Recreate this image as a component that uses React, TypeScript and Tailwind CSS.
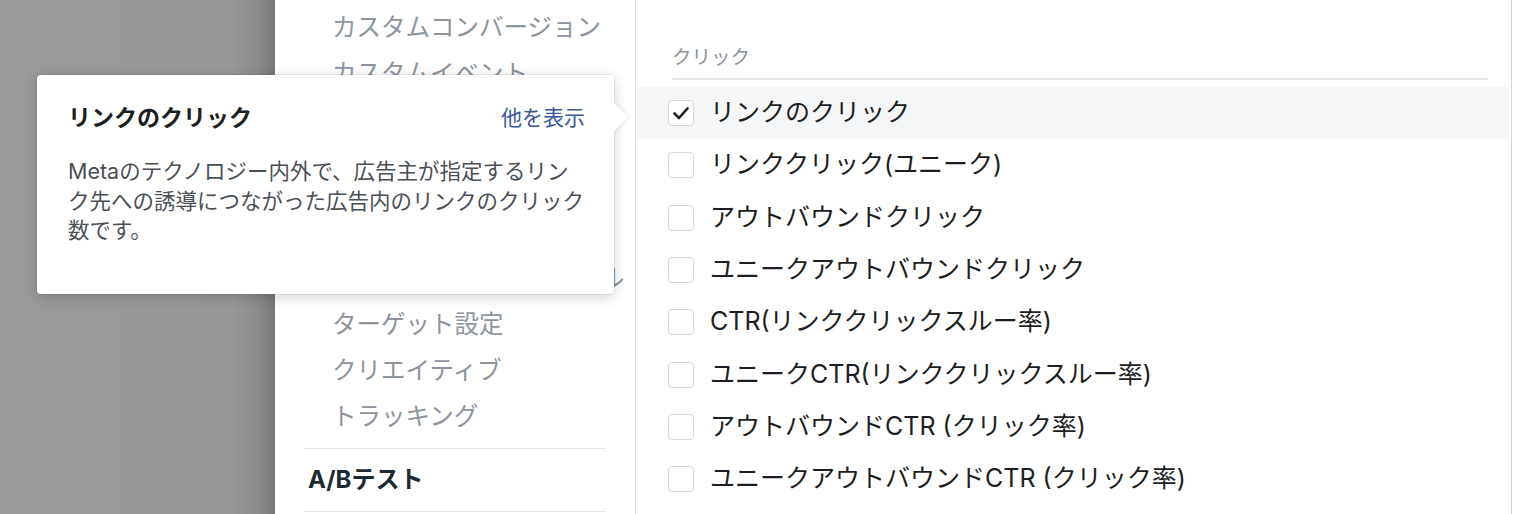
import React from "react";

const navTop = ["カスタムコンバージョン", "カスタムイベント"];
const navSettings = ["オブジェクト名", "ステータスと日付", "予算と入札・スケジュール", "ターゲット設定", "クリエイティブ", "トラッキング"];

const items = [
  { label: "リンクのクリック", checked: true },
  { label: "リンククリック(ユニーク)" },
  { label: "アウトバウンドクリック" },
  { label: "ユニークアウトバウンドクリック" },
  { label: "CTR(リンククリックスルー率)" },
  { label: "ユニークCTR(リンククリックスルー率)" },
  { label: "アウトバウンドCTR (クリック率)" },
  { label: "ユニークアウトバウンドCTR (クリック率)" },
];

function Check() {
  return (
    <svg width="20" height="20" viewBox="0 0 20 20" fill="none">
      <path d="M3.5 10.5 L8 15 L16.5 5.5" stroke="#1c1e21" strokeWidth="2.6" strokeLinecap="round" strokeLinejoin="round" />
    </svg>
  );
}

export default function App() {
  return (
    <div className="relative w-[1514px] h-[514px] overflow-hidden bg-white flex font-['Inter','Noto_Sans_CJK_JP',sans-serif]">
      {/* dimmed backdrop */}
      <div className="w-[275px] shrink-0 h-full bg-[linear-gradient(to_right,#9a9a9a_0%,#979797_85%,#8a8a8a_94%,#777777_100%)]" />

      {/* panel */}
      <div className="w-[1237px] shrink-0 h-full flex border-r border-[#d4d6da]">
        {/* left nav */}
        <div className="w-[361px] shrink-0 h-full border-r border-[#dadde1] flex flex-col pt-[2px] overflow-hidden">
          {navTop.map((t) => (
            <div key={t} className="h-[46px] shrink-0 flex items-center pt-[4px] pl-[57px] text-[24.5px] leading-[30px] text-[#8d949e] whitespace-nowrap">
              {t}
            </div>
          ))}
          <div className="mt-[11px] mx-[29px] h-px shrink-0 bg-[#e4e6eb]" />
          <div className="h-[55px] shrink-0 flex items-center pl-[33px] text-[24px] font-bold text-[#1c2b33]">設定</div>
          {navSettings.map((t) => (
            <div key={t} className="h-[46px] shrink-0 flex items-center pt-[4px] pl-[57px] text-[24.5px] leading-[30px] text-[#8d949e] whitespace-nowrap">
              {t}
            </div>
          ))}
          <div className="mt-[11px] mx-[29px] h-px shrink-0 bg-[#e4e6eb]" />
          <div className="h-[62px] shrink-0 pt-[16px] pl-[33px] text-[24px] leading-[30px] font-bold text-[#1c2b33]">A/Bテスト</div>
          <div className="mx-[29px] h-px shrink-0 bg-[#e4e6eb]" />
        </div>

        {/* right column */}
        <div className="flex-1 h-full flex flex-col pr-[2px]">
          <div className="ml-[36px] mr-[21px] pt-[44px]">
            <div className="text-[19.5px] leading-[26px] text-[#8d949e]">クリック</div>
            <div className="mt-[8px] h-[2px] bg-[#e6e7e9]" />
          </div>
          <div className="mt-[7px] flex flex-col">
            {items.map((it) => (
              <div
                key={it.label}
                className={`h-[52.3px] shrink-0 flex items-center pl-[32px] ${it.checked ? "bg-[#f5f6f7]" : ""}`}
              >
                <div className="w-[26px] h-[26px] rounded-[4px] border border-[#d5d7db] bg-white flex items-center justify-center">
                  {it.checked ? <Check /> : null}
                </div>
                <div className="ml-[16px] text-[25px] leading-[30px] text-[#1c1e21] whitespace-nowrap -mt-[2px]">{it.label}</div>
              </div>
            ))}
          </div>
        </div>
      </div>

      {/* tooltip */}
      <div className="absolute left-[37px] top-[75px] w-[577px] h-[219px] bg-white rounded-[4px] shadow-[0_3px_14px_rgba(0,0,0,0.18),0_0_0_1px_rgba(0,0,0,0.06)]">
        <div className="absolute right-[-10px] top-[32px] w-[20px] h-[20px] bg-white rotate-45 shadow-[2px_-2px_3px_rgba(0,0,0,0.06)]" />
        <div className="relative pl-[31px] pr-[29px] pt-[29px]">
          <div className="flex items-center justify-between">
            <div className="text-[23px] leading-[28px] font-bold text-[#1c1e21]">リンクのクリック</div>
            <div className="text-[21px] leading-[28px] text-[#385898]">他を表示</div>
          </div>
          <div className="mt-[25px] text-[21.5px] leading-[29.5px] text-[#4b4f56] whitespace-nowrap">
            Metaのテクノロジー内外で、広告主が指定するリン
            <br />
            ク先への誘導につながった広告内のリンクのクリック
            <br />
            数です。
          </div>
        </div>
      </div>
    </div>
  );
}
